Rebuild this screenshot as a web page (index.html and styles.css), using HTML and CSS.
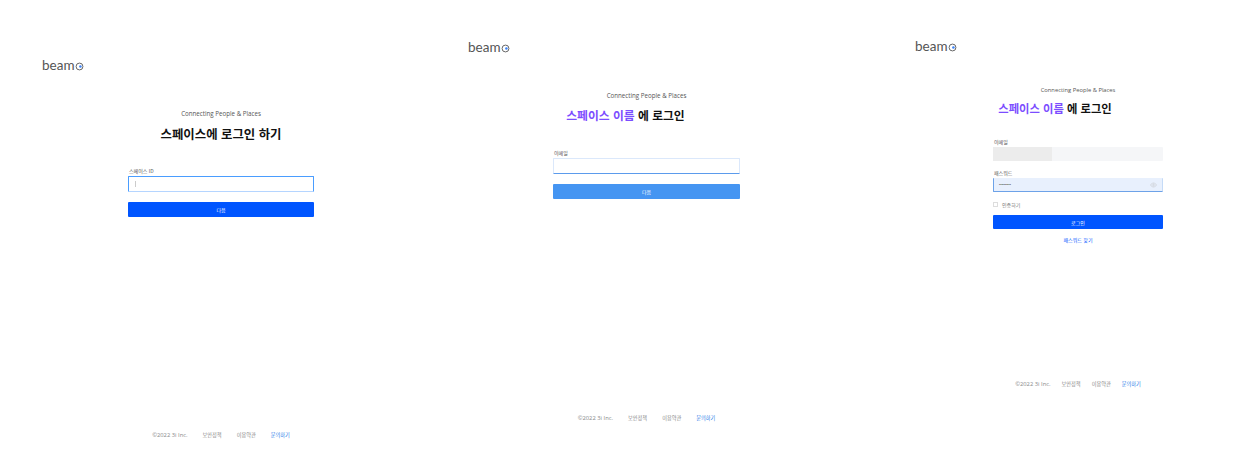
FILE: index.html
```html
<!DOCTYPE html>
<html lang="ko">
<head>
    <meta charset="UTF-8">
    <meta name="viewport" content="width=device-width, initial-scale=1.0">
    <title>beamo 로그인</title>
    <link rel="stylesheet" href="styles.css">
</head>
<body>
    <div class="screens">
        <section class="panel panel-space">
            <div class="logo">beam<svg class="logo-o" viewBox="0 0 10 10"><circle cx="5" cy="5" r="3.8"/><circle class="logo-dot" cx="6" cy="5" r="1.4"/></svg></div>
            <div class="content">
                <p class="tagline">Connecting People &amp; Places</p>
                <h2 class="title">스페이스에 로그인 하기</h2>
                <form class="form">
                    <div class="form-group">
                        <label>스페이스 ID</label>
                        <div class="input input-focus"><span class="caret"></span></div>
                    </div>
                    <button class="btn" type="button">다음</button>
                </form>
                <footer class="footer">
                    <span class="copyright">©2022 3i Inc.</span><span>보안정책</span><span>이용약관</span><span class="footer-link">문의하기</span>
                </footer>
            </div>
        </section>

        <section class="panel panel-email">
            <div class="logo">beam<svg class="logo-o" viewBox="0 0 10 10"><circle cx="5" cy="5" r="3.8"/><circle class="logo-dot" cx="6" cy="5" r="1.4"/></svg></div>
            <div class="content">
                <p class="tagline">Connecting People &amp; Places</p>
                <h2 class="title"><span class="accent">스페이스 이름</span> 에 로그인</h2>
                <form class="form">
                    <div class="form-group">
                        <label>이메일</label>
                        <div class="input input-line"></div>
                    </div>
                    <button class="btn btn-light" type="button">다음</button>
                </form>
                <footer class="footer">
                    <span class="copyright">©2022 3i Inc.</span><span>보안정책</span><span>이용약관</span><span class="footer-link">문의하기</span>
                </footer>
            </div>
        </section>

        <section class="panel panel-login">
            <div class="logo">beam<svg class="logo-o" viewBox="0 0 10 10"><circle cx="5" cy="5" r="3.8"/><circle class="logo-dot" cx="6" cy="5" r="1.4"/></svg></div>
            <div class="content">
                <p class="tagline">Connecting People &amp; Places</p>
                <h2 class="title"><span class="accent">스페이스 이름</span> 에 로그인</h2>
                <form class="form">
                    <div class="form-group">
                        <label>이메일</label>
                        <div class="input input-filled"><span class="redacted"></span></div>
                    </div>
                    <div class="form-group">
                        <label>패스워드</label>
                        <div class="input input-password">
                            <span class="dots">••••••••••</span>
                            <svg class="eye" viewBox="0 0 16 12"><path d="M1 6c2-3 4.500-4.500 7-4.500S13 3 15 6c-2 3-4.500 4.500-7 4.500S3 9 1 6z"/><circle cx="8" cy="6" r="2"/></svg>
                        </div>
                    </div>
                    <div class="remember"><span class="check"></span><span>인증하기</span></div>
                    <button class="btn" type="button">로그인</button>
                    <a class="forgot">패스워드 찾기</a>
                </form>
                <footer class="footer">
                    <span class="copyright">©2022 3i Inc.</span><span>보안정책</span><span>이용약관</span><span class="footer-link">문의하기</span>
                </footer>
            </div>
        </section>
    </div>
</body>
</html>
```

FILE: styles.css
```css
* {
    box-sizing: border-box;
}
body {
    margin: 0;
    background: #fff;
    font-family: "Noto Sans CJK KR", "Noto Sans", sans-serif;
    color: #111;
}
.screens {
    display: grid;
    grid-template-columns: 426px 447px 387px;
    height: 456px;
    overflow: hidden;
}
.panel {
    padding-left: 42px;
}
.logo {
    display: flex;
    align-items: center;
    height: 14px;
    font-family: Lato, sans-serif;
    font-weight: 400;
    font-size: 13.5px;
    line-height: 14px;
    color: #555;
}
.logo-o {
    width: 9px;
    height: 9px;
    margin-top: 2px;
}
.logo-o circle {
    fill: none;
    stroke: #666;
    stroke-width: 1.1;
}
.logo-o .logo-dot {
    fill: #3b82f6;
    stroke: none;
}
.content {
    display: flex;
    flex-direction: column;
    margin-left: 86px;
    width: 186px;
}
.tagline {
    margin: 0;
    text-align: center;
    white-space: nowrap;
    font-family: "Open Sans", sans-serif;
    font-size: 6.2px;
    line-height: 8px;
    color: #555;
}
.title {
    margin: 0;
    text-align: center;
    white-space: nowrap;
    font-size: 12.4px;
    line-height: 18px;
    font-weight: 700;
    color: #111;
}
.accent {
    color: #7c4dff;
}
.form {
    display: flex;
    flex-direction: column;
}
.form-group label {
    display: block;
    margin-bottom: 2px;
    padding-left: 1px;
    font-size: 5px;
    line-height: 7px;
    color: #555;
}
.input {
    display: flex;
    align-items: center;
    height: 16px;
    border-radius: 1px;
}
.input-focus {
    border: 1px solid #4a9dff;
    border-bottom-color: #b5d5ff;
    padding-left: 6px;
}
.caret {
    width: 1px;
    height: 6px;
    background: #ccc;
}
.input-line {
    border: 1px solid #dbe8fb;
    border-bottom-color: #5b9bec;
}
.input-filled {
    height: 14px;
    background: #f5f6f8;
}
.redacted {
    width: 59px;
    height: 100%;
    background: #ececec;
}
.input-password {
    height: 14px;
    justify-content: space-between;
    padding: 0 5px;
    background: #e8f0fd;
    border-left: 1px solid #6da2e8;
    border-right: 1px solid #c5dbf7;
    border-bottom: 1px solid #6da2e8;
}
.dots {
    font-size: 3.5px;
    color: #555;
}
.eye {
    width: 7px;
    height: 6px;
    fill: none;
    stroke: #bbb;
}
.btn {
    height: 15px;
    padding: 0;
    border: none;
    border-radius: 1px;
    background: #0055ff;
    color: #fff;
    font-family: inherit;
    font-size: 5px;
}
.btn-light {
    background: #4595f2;
}
.remember {
    display: flex;
    align-items: center;
    gap: 4px;
    height: 8px;
    margin-top: 8px;
    font-size: 5px;
    color: #777;
}
.check {
    width: 5px;
    height: 5px;
    border: 1px solid #ddd;
}
.forgot {
    margin-top: 7px;
    text-align: center;
    font-size: 5px;
    line-height: 8px;
    color: #0055ff;
}
.footer {
    display: flex;
    justify-content: center;
    white-space: nowrap;
    font-size: 5.2px;
    line-height: 8px;
    color: #888;
}
.footer span + span {
    margin-left: 15px;
}
.footer .copyright {
    font-family: "Open Sans", sans-serif;
    font-size: 5.8px;
}
.footer .footer-link {
    color: #1f7ae8;
}

/* 패널별 위치 */
.panel-space {
    padding-top: 58px;
}
.panel-space .tagline {
    margin-top: 38px;
}
.panel-space .title {
    margin-top: 7px;
}
.panel-space .form {
    margin-top: 24px;
}
.panel-space .btn {
    margin-top: 10px;
}
.panel-space .footer {
    margin-top: 214px;
}
.panel-email {
    padding-top: 40px;
}
.panel-email .content {
    margin-left: 85px;
    width: 187px;
}
.panel-email .tagline {
    margin-top: 38px;
}
.panel-email .title {
    margin-top: 6px;
    font-size: 11.8px;
    padding-right: 42px;
}
.panel-email .form {
    margin-top: 25px;
}
.panel-email .btn {
    margin-top: 10px;
}
.panel-email .footer {
    margin-top: 215px;
}
.panel-login {
    padding-top: 39px;
}
.panel-login .content {
    margin-left: 78px;
    width: 170px;
}
.panel-login .tagline {
    margin-top: 33px;
    font-size: 5.8px;
}
.panel-login .title {
    margin-top: 5px;
    font-size: 11.3px;
    padding-right: 46px;
}
.panel-login .form {
    margin-top: 21px;
}
.panel-login .form-group + .form-group {
    margin-top: 8px;
}
.panel-login .btn {
    margin-top: 7px;
    height: 14px;
}
.panel-login .footer {
    margin-top: 136px;
}
.panel-login .footer span + span {
    margin-left: 11px;
}
```
